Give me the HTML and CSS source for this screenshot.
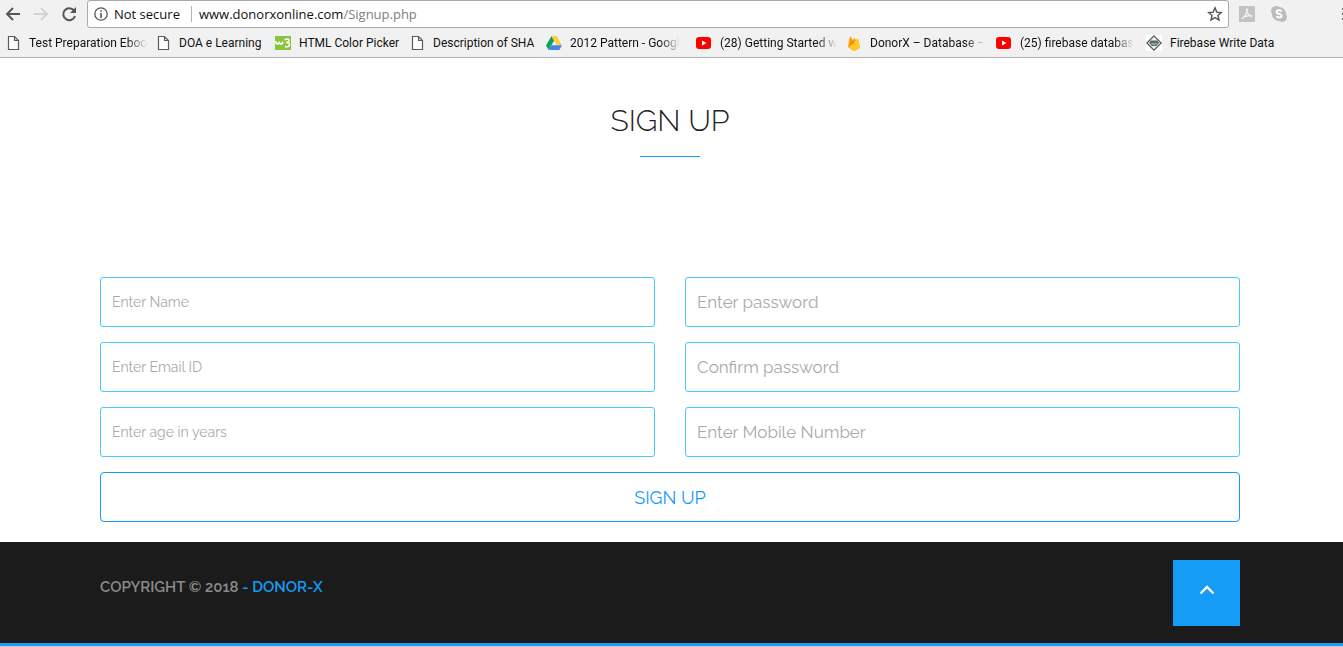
FILE: index.html
```html
<!DOCTYPE html>
<html lang="en">
<head>
<meta charset="utf-8">
<title>Donor-X Sign Up</title>
<link rel="stylesheet" href="styles.css">
</head>
<body>
<svg class="sprite" aria-hidden="true">
  <symbol id="page" viewBox="0 0 16 16"><path d="M3.5 1.5h6l4 4v9h-10zM9.5 1.5v4h4" fill="#fff" stroke="#5a5a5a" stroke-width="1.2"/></symbol>
  <symbol id="youtube" viewBox="0 0 16 16"><rect x="0" y="2" width="15" height="12" rx="3" fill="#f00"/><path d="M6 5.5v5L10.5 8z" fill="#fff"/></symbol>
</svg>
<header class="chrome">
  <div class="toolbar">
    <nav class="history">
      <button class="tool" aria-label="Back"><svg width="16" height="16" viewBox="0 0 16 16"><path d="M15 8H2M8 2L2 8l6 6" fill="none" stroke="#555" stroke-width="1.9"/></svg></button>
      <button class="tool" aria-label="Forward"><svg width="16" height="16" viewBox="0 0 16 16"><path d="M1 8h13M8 2l6 6-6 6" fill="none" stroke="#d2d2d2" stroke-width="1.9"/></svg></button>
      <button class="tool" aria-label="Reload"><svg width="16" height="16" viewBox="0 0 16 16"><path d="M13 4.5A6 6 0 1 0 14 10" fill="none" stroke="#555" stroke-width="2"/><path d="M15 1v6H9z" fill="#555"/></svg></button>
    </nav>
    <div class="address">
      <svg width="14" height="14" viewBox="0 0 14 14"><circle cx="7" cy="7" r="6.2" fill="none" stroke="#555" stroke-width="1.3"/><path d="M7 6v5M7 3.2v1.6" stroke="#555" stroke-width="1.6"/></svg>
      <span class="secure">Not secure</span>
      <span class="url">www.donorxonline.com<span class="path">/Signup.php</span></span>
      <button class="tool star" aria-label="Bookmark this page"><svg width="16" height="16" viewBox="0 0 16 16"><path d="M8 1.8l1.8 4.3 4.6.4-3.5 3 1.1 4.6L8 11.6l-4 2.5 1.1-4.6-3.5-3 4.6-.4z" fill="none" stroke="#555" stroke-width="1.4"/></svg></button>
    </div>
    <div class="extensions">
      <button class="tool" aria-label="PDF"><svg width="16" height="16" viewBox="0 0 16 16"><path d="M0 0h16v16H0z" fill="#c3c3c3"/><path d="M7.500 2.500c2 1.500-.5 7-4.500 10.500M7.500 3c-1 3 2 6.500 6 7.500M3 13c1.500-2.500 6-4 10.500-2.800" fill="none" stroke="#f3f3f3" stroke-width="1.300"/></svg></button>
      <button class="tool" aria-label="Skype"><svg width="16" height="16" viewBox="0 0 16 16"><circle cx="5" cy="5" r="5" fill="#bcbcbc"/><circle cx="11" cy="11" r="5" fill="#bcbcbc"/><circle cx="8" cy="8" r="7" fill="#bcbcbc"/><path d="M10.800 5.500C9.500 3.800 5.500 3.800 5.500 6.200c0 2.200 5.200 1.200 5.200 3.600 0 2.200-4 2.200-5.500.3" fill="none" stroke="#fff" stroke-width="1.900"/></svg></button>
    </div>
    <button class="tool menu" aria-label="Menu"><svg width="1" height="16" viewBox="0 0 1 16"><path d="M0 2h1v2H0zM0 7h1v2H0zM0 12h1v2H0z" fill="#666"/></svg></button>
  </div>
  <nav class="bookmarks">
    <a href="#"><svg><use href="#page"/></svg><span class="fade">Test Preparation Eboo</span></a>
    <a href="#"><svg><use href="#page"/></svg><span>DOA e Learning</span></a>
    <a href="#"><svg viewBox="0 0 16 16"><path d="M0 1h16v14H0z" fill="#8bc540"/><path d="M.8 6q0 3 1.700 3T4.300 6.500Q4.500 9 6 9t2-2.500M9.500 4.800q4.500-2 4.500.5 0 1.900-2.800 2.200 3.600 0 3.300 2.500-.6 2.500-4.500 1.500" fill="none" stroke="#fff" stroke-width="1.500"/></svg><span>HTML Color Picker</span></a>
    <a href="#"><svg><use href="#page"/></svg><span>Description of SHA</span></a>
    <a href="#"><svg viewBox="0 0 16 16"><path d="M5.500 1L0 10.500 2.700 15l5.500-9.500z" fill="#11a05e"/><path d="M5.500 1h5.300L16 10.200h-5.300z" fill="#ffce44"/><path d="M5.500 10.200H16L13.300 15H2.700z" fill="#4286f5"/></svg><span class="fade">2012 Pattern - Googl</span></a>
    <a href="#"><svg><use href="#youtube"/></svg><span class="fade">(28) Getting Started w</span></a>
    <a href="#"><svg viewBox="0 0 16 16"><path d="M2 12L4 1l3 4 1.500-2L10 5l2-1.500L14 13l-6 3z" fill="#ffa000"/><path d="M2 12L12 3.500 14 13l-6 3z" fill="#ffca28"/><path d="M2 12L7 5l1.500 3z" fill="#f58220"/></svg><span class="fade">DonorX – Database –</span></a>
    <a href="#"><svg><use href="#youtube"/></svg><span class="fade">(25) firebase databas</span></a>
    <a href="#"><svg viewBox="0 0 16 16"><path d="M0 0h16v16H0z" fill="#fff"/><path d="M8 .8L15.200 8 8 15.200.8 8z" fill="#eee" stroke="#555" stroke-width="1.200"/><path d="M4.500 5.500h7L13 8l-3 3H6L3 8z" fill="#4d7562"/><path d="M5.500 8.500q2.500 1.500 5 0" fill="none" stroke="#c8ddd0"/></svg><span>Firebase Write Data</span></a>
  </nav>
</header>
<main class="signup">
  <div class="container">
    <h1>Sign Up</h1>
    <form class="form">
      <input class="small" type="text" aria-label="Name" placeholder="Enter Name">
      <input type="password" aria-label="Password" placeholder="Enter password">
      <input class="small" type="email" aria-label="Email ID" placeholder="Enter Email ID">
      <input type="password" aria-label="Confirm password" placeholder="Confirm password">
      <input class="small" type="text" aria-label="Age" placeholder="Enter age in years">
      <input type="tel" aria-label="Mobile number" placeholder="Enter Mobile Number">
      <button class="submit" type="button">SIGN UP</button>
    </form>
  </div>
</main>
<footer class="footer">
  <div class="container footer-row">
    <p>COPYRIGHT © 2018 <a href="#">- DONOR-X</a></p>
    <a class="to-top" href="#" aria-label="Back to top"><svg width="16" height="10" viewBox="0 0 16 10"><path d="M1.500 8.500L8 2l6.500 6.500" fill="none" stroke="#fff" stroke-width="2.400"/></svg></a>
  </div>
</footer>
</body>
</html>
```
FILE: styles.css
```css
* { box-sizing: border-box; }
body {
  margin: 0;
  border-bottom: 1px solid #ccc;
  background: #fff;
  font-family: Raleway, Lato, sans-serif;
}
a { color: inherit; text-decoration: none; }
svg { display: block; flex: none; }
.sprite { position: absolute; width: 0; height: 0; }

.chrome {
  background: #f1f1f1;
  border-bottom: 1px solid #b4b4b4;
  color: #111;
  font-family: "Segoe UI", "Open Sans", sans-serif;
  overflow: hidden;
}
.toolbar { display: flex; align-items: center; height: 28px; }
.tool { display: flex; padding: 0; border: 0; background: none; }
.history { display: flex; gap: 12px; padding: 0 10px 0 5px; }
.address {
  flex: 1;
  display: flex;
  align-items: center;
  height: 28px;
  padding: 0 5px 0 6px;
  border: 1px solid #a9a9a9;
  border-radius: 3px;
  background: #fff;
  font-size: 13px;
}
.secure { margin: 0 7px 0 6px; padding-right: 11px; border-right: 1px solid #b4b4b4; line-height: 16px; }
.path { color: #808080; }
.star { margin-left: auto; }
.extensions { display: flex; gap: 16px; padding: 0 55px 0 10px; }
.bookmarks {
  display: grid;
  grid-template-columns: 150px 120px 134px 137px repeat(5, 150px);
  align-items: center;
  height: 29px;
  padding-left: 5px;
  font-family: "Segoe UI", Roboto, sans-serif;
  font-size: 12px;
}
.bookmarks a { display: flex; align-items: center; gap: 8px; }
.bookmarks svg { width: 16px; height: 16px; }
.bookmarks span { white-space: nowrap; }
.bookmarks .fade { mask-image: linear-gradient(to left, transparent, #000 20px); }

.container { max-width: 1140px; margin: 0 auto; }
.signup { padding: 43px 3px 20px 0; }
h1 {
  margin: 0 0 120px;
  font-size: 30px;
  font-weight: 300;
  line-height: 40px;
  text-align: center;
  text-transform: uppercase;
  color: #222;
}
h1::after {
  content: "";
  display: block;
  width: 60px;
  height: 1px;
  margin: 15px auto 0;
  background: #159cf6;
}
.form { display: grid; grid-template-columns: 1fr 1fr; gap: 15px 30px; }
.form input {
  width: 100%;
  height: 50px;
  padding: 0 11px;
  border: 1px solid #46cbf9;
  border-radius: 3px;
  background: #fff;
  font-family: inherit;
  font-size: 17px;
}
.form .small { font-size: 14px; }
.form input::placeholder { color: #aaa; opacity: 1; }
.submit {
  grid-column: 1 / -1;
  height: 50px;
  border: 1px solid #159cf6;
  border-radius: 4px;
  background: #fff;
  color: #159cf6;
  font-family: inherit;
  font-size: 18px;
}
.footer {
  padding: 18px 3px 17px 0;
  background: #1b1b1b;
  border-bottom: 3px solid #159cf6;
}
.footer-row { display: flex; justify-content: space-between; }
.footer p {
  margin: 17px 0 0;
  font-size: 15px;
  font-weight: 600;
  line-height: 20px;
  color: #8b8b8b;
}
.footer p a { color: #159cf6; }
.to-top {
  display: flex;
  align-items: center;
  justify-content: center;
  width: 67px;
  height: 66px;
  padding-bottom: 6px;
  background: #159cf6;
}
```
